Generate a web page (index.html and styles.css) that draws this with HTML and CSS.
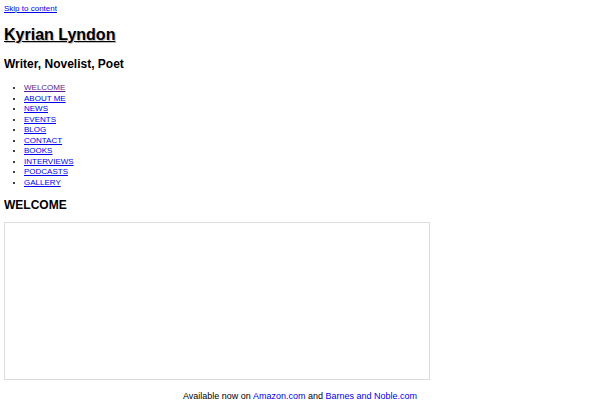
FILE: index.html
```html
<!DOCTYPE html>
<html lang="en">
<head>
<meta charset="utf-8">
<title>Kyrian Lyndon</title>
<link rel="stylesheet" href="styles.css">
</head>
<body>
<a class="skip-link" href="#content">Skip to content</a>
<header class="site-header">
  <h1 class="site-title"><a href="#">Kyrian Lyndon</a></h1>
  <h2 class="site-tagline">Writer, Novelist, Poet</h2>
</header>
<nav class="site-nav">
  <ul class="menu">
    <li><a class="current" href="#">WELCOME</a></li>
    <li><a href="#">ABOUT ME</a></li>
    <li><a href="#">NEWS</a></li>
    <li><a href="#">EVENTS</a></li>
    <li><a href="#">BLOG</a></li>
    <li><a href="#">CONTACT</a></li>
    <li><a href="#">BOOKS</a></li>
    <li><a href="#">INTERVIEWS</a></li>
    <li><a href="#">PODCASTS</a></li>
    <li><a href="#">GALLERY</a></li>
  </ul>
</nav>
<main id="content" class="content">
  <h2 class="page-title">WELCOME</h2>
  <div class="embed"></div>
  <p class="availability">Available now on <a href="#">Amazon.com</a> and <a href="#">Barnes and Noble.com</a></p>
</main>
</body>
</html>
```

FILE: styles.css
```css
html, body {
  background: #fff;
}
body {
  margin: 4px;
  font-family: "Liberation Sans", Arial, sans-serif;
  font-size: 8px;
  color: #000;
}
a {
  color: #0000ee;
}
.skip-link {
  display: inline-block;
}
.site-title {
  font-size: 16px;
  margin: 13px 0;
}
.site-title a {
  color: #000;
  text-shadow: 1px 1px 1px #bbb;
}
.site-tagline {
  font-size: 12px;
  margin: 13px 0 12px;
}
.menu {
  margin: 12px 0 8px;
  padding-left: 20px;
}
.menu li {
  line-height: 10.5px;
}
.menu a.current {
  color: #551a8b;
}
.page-title {
  font-size: 12px;
  margin: 10px 0;
}
.embed {
  width: 424px;
  height: 156px;
  border: 1px solid #dcdcdc;
}
.availability {
  text-align: center;
  font-size: 9px;
  margin: 11px 0 0;
}
.availability a {
  text-decoration: none;
}
```
